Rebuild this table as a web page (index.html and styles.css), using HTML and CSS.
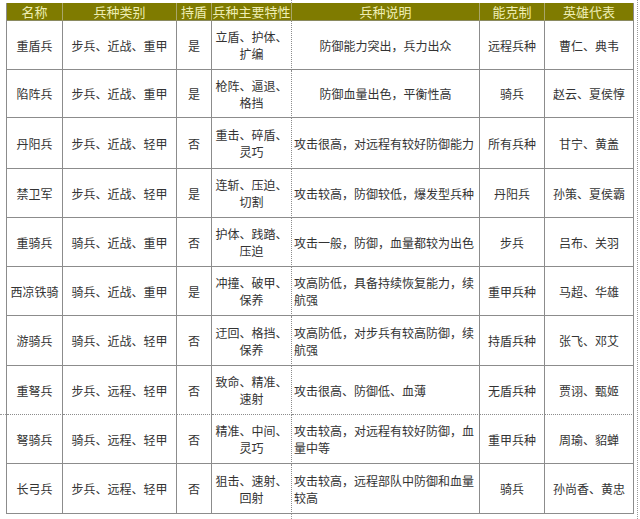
FILE: index.html
```html
<!DOCTYPE html>
<html lang="zh-CN">
<head>
<meta charset="utf-8">
<title>兵种表</title>
<link rel="stylesheet" href="styles.css">
</head>
<body>
<div class="page">
  <div class="sheet">
    <div class="row head">
      <div class="c">名称</div><div class="c">兵种类别</div><div class="c">持盾</div><div class="c">兵种主要特性</div><div class="c">兵种说明</div><div class="c">能克制</div><div class="c">英雄代表</div>
    </div>
    <div class="row">
      <div class="c">重盾兵</div><div class="c">步兵、近战、重甲</div><div class="c">是</div><div class="c"><span>立盾、护体、</span><span>扩编</span></div><div class="c">防御能力突出，兵力出众</div><div class="c">远程兵种</div><div class="c">曹仁、典韦</div>
    </div>
    <div class="row">
      <div class="c">陷阵兵</div><div class="c">步兵、近战、重甲</div><div class="c">是</div><div class="c"><span>枪阵、逼退、</span><span>格挡</span></div><div class="c">防御血量出色，平衡性高</div><div class="c">骑兵</div><div class="c">赵云、夏侯惇</div>
    </div>
    <div class="row">
      <div class="c">丹阳兵</div><div class="c">步兵、近战、轻甲</div><div class="c">否</div><div class="c"><span>重击、碎盾、</span><span>灵巧</span></div><div class="c l">攻击很高，对远程有较好防御能力</div><div class="c">所有兵种</div><div class="c">甘宁、黄盖</div>
    </div>
    <div class="row">
      <div class="c">禁卫军</div><div class="c">步兵、近战、轻甲</div><div class="c">是</div><div class="c"><span>连斩、压迫、</span><span>切割</span></div><div class="c l">攻击较高，防御较低，爆发型兵种</div><div class="c">丹阳兵</div><div class="c">孙策、夏侯霸</div>
    </div>
    <div class="row">
      <div class="c">重骑兵</div><div class="c">骑兵、近战、重甲</div><div class="c">否</div><div class="c"><span>护体、践踏、</span><span>压迫</span></div><div class="c l">攻击一般，防御，血量都较为出色</div><div class="c">步兵</div><div class="c">吕布、关羽</div>
    </div>
    <div class="row">
      <div class="c">西凉铁骑</div><div class="c">骑兵、近战、重甲</div><div class="c">是</div><div class="c"><span>冲撞、破甲、</span><span>保养</span></div><div class="c l"><span>攻高防低，具备持续恢复能力，续</span><span>航强</span></div><div class="c">重甲兵种</div><div class="c">马超、华雄</div>
    </div>
    <div class="row">
      <div class="c">游骑兵</div><div class="c">骑兵、近战、轻甲</div><div class="c">否</div><div class="c"><span>迂回、格挡、</span><span>保养</span></div><div class="c l"><span>攻高防低，对步兵有较高防御，续</span><span>航强</span></div><div class="c">持盾兵种</div><div class="c">张飞、邓艾</div>
    </div>
    <div class="row brk">
      <div class="c">重弩兵</div><div class="c">步兵、远程、轻甲</div><div class="c">否</div><div class="c"><span>致命、精准、</span><span>速射</span></div><div class="c l">攻击很高、防御低、血薄</div><div class="c">无盾兵种</div><div class="c">贾诩、甄姬</div>
    </div>
    <div class="row">
      <div class="c">弩骑兵</div><div class="c">骑兵、远程、轻甲</div><div class="c">否</div><div class="c"><span>精准、中间、</span><span>灵巧</span></div><div class="c l"><span>攻击较高，对远程有较好防御，血</span><span>量中等</span></div><div class="c">重甲兵种</div><div class="c">周瑜、貂蝉</div>
    </div>
    <div class="row">
      <div class="c">长弓兵</div><div class="c">步兵、远程、轻甲</div><div class="c">否</div><div class="c"><span>狙击、速射、</span><span>回射</span></div><div class="c l"><span>攻击较高，远程部队中防御和血量</span><span>较高</span></div><div class="c">骑兵</div><div class="c">孙尚香、黄忠</div>
    </div>
  </div>
  <div class="pb pb-left"></div>
  <div class="pb pb-top"></div>
  <div class="pb pb-bottom"></div>
  <div class="pb pb-right"></div>
</div>
</body>
</html>
```

FILE: styles.css
```css
html, body {
  margin: 0;
  padding: 0;
  background: #ffffff;
}

.page {
  position: relative;
  width: 640px;
  height: 519px;
  overflow: hidden;
  padding-top: 3px;
  padding-left: 6px;
  box-sizing: border-box;
  font-family: "Noto Sans CJK SC", "Noto Sans", sans-serif;
  font-size: 12px;
  color: #333333;
}

.sheet {
  display: grid;
  width: 628px;
  box-sizing: border-box;
  border-left: 1px solid #8c8c8c;
  grid-template-columns: 56px 114px 35px 80px 188px 65px 89px;
  grid-template-rows: 18px 49px 48px 51px 49px 49px 49px 50px 49px 49px 50px;
}

.row {
  display: contents;
}

.c {
  box-sizing: border-box;
  border-right: 1px solid #8c8c8c;
  border-bottom: 1px solid #8c8c8c;
  display: flex;
  flex-direction: column;
  justify-content: center;
  align-items: center;
  padding: 0 2px;
  line-height: 17px;
  overflow: hidden;
  white-space: nowrap;
}

.c > span {
  display: block;
}

.c:nth-child(4) {
  border-right: 1px dotted #8c8c8c;
}

.c.l {
  align-items: flex-start;
  padding: 0 2px;
}

.brk .c {
  border-bottom: 1px dotted #8c8c8c;
}

.head .c {
  background: #7f7b00;
  color: #eeeeb4;
  font-size: 13px;
  line-height: 17px;
  border-right: 1px solid #a9a66a;
  border-bottom: 1px solid #8a8a60;
  padding: 0;
}

.head .c:last-child {
  border-right: 1px solid #8c8c8c;
}

.pb {
  position: absolute;
  border: 0 dotted #9a9a9a;
}

.pb-left {
  top: 414px;
  left: 0;
  width: 6px;
  border-top-width: 1px;
}

.pb-top {
  top: 0;
  left: 291px;
  height: 3px;
  border-left-width: 1px;
}

.pb-bottom {
  top: 514px;
  left: 291px;
  height: 5px;
  border-left-width: 1px;
}

.pb-right {
  top: 0;
  left: 637px;
  height: 519px;
  border-left-width: 1px;
}
```
